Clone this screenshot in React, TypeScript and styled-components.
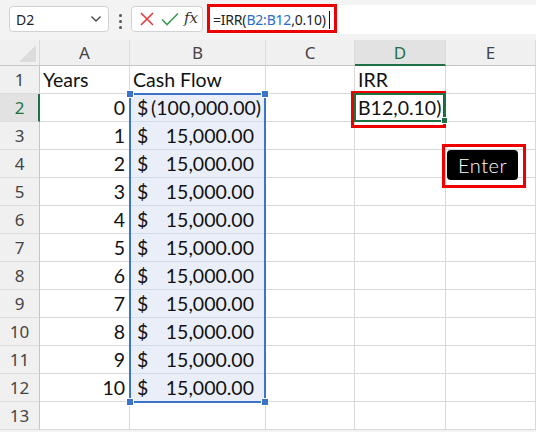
import React from 'react'
import styled, { createGlobalStyle, css } from 'styled-components'

const GlobalStyle = createGlobalStyle`
  html, body {
    margin: 0;
    padding: 0;
    background: #ffffff;
  }
  body {
    width: 536px;
    height: 432px;
    overflow: hidden;
    font-family: 'Noto Sans', 'Open Sans', sans-serif;
  }
`

const RED = '#ee0000'
const GREEN = '#1e7145'
const BLUE = '#3c74c9'

const Page = styled.div`
  width: 536px;
  height: 432px;
  display: flex;
  flex-direction: column;
  background: #f3f3f3;
  position: relative;
  overflow: hidden;
`

const FormulaBar = styled.div`
  height: 40px;
  display: flex;
  align-items: flex-start;
  padding-top: 5px;
  box-sizing: border-box;
  background: #f3f3f3;
`

const NameBox = styled.div`
  margin-left: 9px;
  width: 100px;
  height: 26px;
  margin-top: 1px;
  box-sizing: border-box;
  background: #fff;
  border: 1px solid #d2d2d2;
  border-radius: 4px;
  display: flex;
  align-items: center;
  justify-content: space-between;
  padding: 0 6px 0 6px;
  font-size: 14px;
  color: #222;
`

const Dots = styled.div`
  width: 22px;
  display: flex;
  flex-direction: column;
  align-items: center;
  gap: 3px;
  margin-top: 9px;

  span {
    width: 3px;
    height: 3px;
    border-radius: 50%;
    background: #555;
  }
`

const IconBox = styled.div`
  width: 72px;
  height: 26px;
  margin-top: 1px;
  box-sizing: border-box;
  background: #fff;
  border: 1px solid #d2d2d2;
  border-radius: 4px;
  display: flex;
  align-items: center;
  justify-content: space-between;
  padding: 0 4px 0 6px;
`

const Fx = styled.span`
  font-family: 'DejaVu Serif', 'Liberation Serif', serif;
  font-style: italic;
  font-size: 15px;
  color: #333;
  margin-top: -2px;
`

const FormulaInput = styled.div`
  flex: 1;
  margin-left: 4px;
  height: 29px;
  background: #fff;
  display: flex;
  align-items: center;
  position: relative;
  font-size: 14px;
  color: #222;
  padding-left: 6px;
  box-sizing: border-box;
  letter-spacing: -0.2px;
`

const Ref = styled.span`
  color: #2a6fc4;
`

const Caret = styled.span`
  display: inline-block;
  width: 1px;
  height: 18px;
  background: #111;
  margin-left: 3px;
`

const Callout = styled.div<{ $w: number; $h: number }>`
  position: absolute;
  width: ${(p) => p.$w}px;
  height: ${(p) => p.$h}px;
  border: 3px solid ${RED};
  box-sizing: border-box;
  pointer-events: none;
`

const gridTemplate = css`
  display: grid;
  grid-template-columns: 40px 90px 136px 89px 91px 90px;
  grid-template-rows: 26px repeat(13, 28px);
`

const SheetWrap = styled.div`
  position: relative;
  background: #fff;
`

const Sheet = styled.div`
  ${gridTemplate};
`

const Overlay = styled.div`
  ${gridTemplate};
  position: absolute;
  inset: 0;
  pointer-events: none;
`

const headerBase = css`
  box-sizing: border-box;
  background: #f0f0f0;
  color: #444;
  font-family: 'Noto Sans', 'Open Sans', sans-serif;
  display: flex;
  align-items: center;
  justify-content: center;
`

const Corner = styled.div`
  ${headerBase};
  border-right: 1px solid #d8d8d8;
  border-bottom: 1px solid #c6c6c6;
  position: relative;

  &::after {
    content: '';
    position: absolute;
    right: 3px;
    bottom: 3px;
    border-style: solid;
    border-width: 0 0 17px 17px;
    border-color: transparent transparent #dcdcdc transparent;
  }
`

const ColHead = styled.div<{ $active?: boolean }>`
  ${headerBase};
  font-size: 17px;
  border-right: 1px solid #dcdcdc;
  border-bottom: ${(p) => (p.$active ? `2px solid ${GREEN}` : '1px solid #c6c6c6')};
  background: ${(p) => (p.$active ? '#e2e2e2' : '#f0f0f0')};
  color: ${(p) => (p.$active ? GREEN : '#444')};
  padding-top: ${(p) => (p.$active ? '1px' : '0')};
`

const RowHead = styled.div<{ $active?: boolean }>`
  ${headerBase};
  font-size: 17px;
  border-bottom: 1px solid #dcdcdc;
  border-right: ${(p) => (p.$active ? `2px solid ${GREEN}` : '1px solid #c6c6c6')};
  background: ${(p) => (p.$active ? '#e2e2e2' : '#f0f0f0')};
  color: ${(p) => (p.$active ? GREEN : '#444')};
  padding-left: ${(p) => (p.$active ? '1px' : '0')};
`

const Cell = styled.div<{ $align?: 'left' | 'right'; $sel?: boolean }>`
  box-sizing: border-box;
  border-right: 1px solid #d9d9d9;
  border-bottom: 1px solid #d9d9d9;
  background: ${(p) => (p.$sel ? '#e9eef8' : '#fff')};
  border-color: ${(p) => (p.$sel ? '#d2dbe9' : '#d9d9d9')};
  font-family: 'Lato', 'Liberation Sans', sans-serif;
  font-size: 19.5px;
  color: #111;
  display: flex;
  align-items: center;
  justify-content: ${(p) => (p.$align === 'right' ? 'flex-end' : 'flex-start')};
  padding: 0 4px 0 3px;
  white-space: nowrap;
  overflow: visible;
  min-width: 0;
`

const Money = styled(Cell)`
  justify-content: space-between;
  padding: 0 4px 0 7px;
`

const Amount = styled.span<{ $neg?: boolean }>`
  padding-right: ${(p) => (p.$neg ? '0' : '7px')};
`

const Selection = styled.div`
  grid-column: 3;
  grid-row: 3 / 14;
  margin: -1px 0 -1px -1px;
  border: 2px solid ${BLUE};
  position: relative;
`

const Handle = styled.span<{ $x: 'l' | 'r'; $y: 't' | 'b' }>`
  position: absolute;
  width: 6px;
  height: 6px;
  background: ${BLUE};
  border: 1px solid #fff;
  ${(p) => (p.$x === 'l' ? 'left: -5px;' : 'right: -5px;')}
  ${(p) => (p.$y === 't' ? 'top: -5px;' : 'bottom: -5px;')}
`

const ActiveCell = styled.div`
  grid-column: 5;
  grid-row: 3;
  margin: -1px 0 0 -1px;
  border: 2px solid ${GREEN};
  position: relative;

  &::after {
    content: '';
    position: absolute;
    right: -4px;
    bottom: -4px;
    width: 5px;
    height: 5px;
    background: ${GREEN};
    border: 1px solid #fff;
  }
`

const CellCallout = styled.div`
  grid-column: 5;
  grid-row: 3;
  margin: -3px 0 -6px -4px;
  border: 3px solid ${RED};
`

const EnterKey = styled.div`
  position: absolute;
  left: 447px;
  top: 150px;
  width: 71px;
  height: 30px;
  border-radius: 4px;
  background: #000;
  color: #fff;
  font-family: 'Lato', 'DejaVu Sans', sans-serif;
  font-weight: 300;
  font-size: 20px;
  display: flex;
  align-items: center;
  justify-content: center;
  letter-spacing: 0.5px;
  z-index: 4;
`

const XIcon = () => (
  <svg width="18" height="18" viewBox="0 0 18 18">
    <path d="M3 3 L15 15 M15 3 L3 15" stroke="#e23a3c" strokeWidth="1.6" fill="none" />
  </svg>
)

const CheckIcon = () => (
  <svg width="20" height="18" viewBox="0 0 20 18">
    <path d="M2 9.5 L7 14.5 L18 3.5" stroke="#3a9d55" strokeWidth="1.6" fill="none" />
  </svg>
)

const Chevron = () => (
  <svg width="12" height="8" viewBox="0 0 12 8">
    <path d="M1.5 1.5 L6 6 L10.5 1.5" stroke="#444" strokeWidth="1.3" fill="none" />
  </svg>
)

const flows = [-100000, 15000, 15000, 15000, 15000, 15000, 15000, 15000, 15000, 15000, 15000]

const fmt = (n: number) => {
  const s = Math.abs(n).toLocaleString('en-US', { minimumFractionDigits: 2, maximumFractionDigits: 2 })
  return n < 0 ? `(${s})` : s
}

export default function App() {
  const rows = Array.from({ length: 13 }, (_, i) => i + 1)

  return (
    <>
      <GlobalStyle />
      <Page>
        <FormulaBar>
          <NameBox>
            <span>D2</span>
            <Chevron />
          </NameBox>
          <Dots>
            <span />
            <span />
            <span />
          </Dots>
          <IconBox>
            <XIcon />
            <CheckIcon />
            <Fx>fx</Fx>
          </IconBox>
          <FormulaInput>
            =IRR(<Ref>B2:B12</Ref>,0.10)
            <Caret />
          </FormulaInput>
        </FormulaBar>

        <Callout $w={130} $h={29} style={{ left: 207, top: 4 }} />

        <SheetWrap>
          <Sheet>
            <Corner />
            {['A', 'B', 'C', 'D', 'E'].map((c) => (
              <ColHead key={c} $active={c === 'D'}>
                {c}
              </ColHead>
            ))}

            {rows.map((r) => {
              const inRange = r >= 2 && r <= 12
              const year = inRange ? r - 2 : null
              return (
                <React.Fragment key={r}>
                  <RowHead $active={r === 2}>{r}</RowHead>
                  {r === 1 ? (
                    <>
                      <Cell>Years</Cell>
                      <Cell>Cash Flow</Cell>
                      <Cell />
                      <Cell>IRR</Cell>
                      <Cell />
                    </>
                  ) : (
                    <>
                      <Cell $align="right">{year !== null ? year : ''}</Cell>
                      {inRange ? (
                        <Money $sel>
                          <span>$</span>
                          <Amount $neg={flows[r - 2] < 0}>{fmt(flows[r - 2])}</Amount>
                        </Money>
                      ) : (
                        <Cell />
                      )}
                      <Cell />
                      <Cell>{r === 2 ? 'B12,0.10)' : ''}</Cell>
                      <Cell />
                    </>
                  )}
                </React.Fragment>
              )
            })}
          </Sheet>

          <Overlay>
            <Selection>
              <Handle $x="l" $y="t" />
              <Handle $x="r" $y="t" />
              <Handle $x="l" $y="b" />
              <Handle $x="r" $y="b" />
            </Selection>
            <ActiveCell />
            <CellCallout />
          </Overlay>
        </SheetWrap>

        <Callout $w={84} $h={44} style={{ left: 442, top: 144 }} />
        <EnterKey>Enter</EnterKey>
      </Page>
    </>
  )
}
